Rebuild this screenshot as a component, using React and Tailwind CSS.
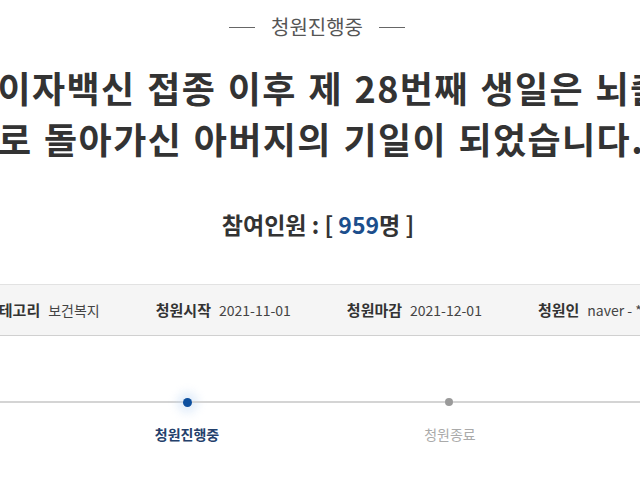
const Item = ({ label, value }) => (
  <div className="shrink-0 flex items-center gap-[8px] whitespace-nowrap">
    <span className="font-bold text-[#333] text-[15px]">{label}</span>
    <span className="text-[#444] text-[14px]">{value}</span>
  </div>
);

export default function App() {
  return (
    <div className="w-[640px] h-[480px] bg-white overflow-hidden font-['Noto_Sans_CJK_KR',sans-serif]">
      {/* status label */}
      <div className="pt-[16px] h-[38px] flex items-center justify-center gap-[16px] text-[#555] -ml-[6px]">
        <span className="w-[26px] h-px bg-[#666]" />
        <span className="text-[20px] leading-[22px]">청원진행중</span>
        <span className="w-[26px] h-px bg-[#666]" />
      </div>

      {/* title */}
      <div className="mt-[24px] text-[36px] leading-[51px] font-bold text-[#333] whitespace-nowrap tracking-[1.4px] [word-spacing:2px]">
        <div className="-ml-[37px]">화이자백신 접종 이후 제 28번째 생일은 뇌출혈</div>
        <div className="-ml-[2px]">로 돌아가신 아버지의 기일이 되었습니다.</div>
      </div>

      {/* participants */}
      <div className="mt-[44px] h-[32px] flex items-center justify-center text-[23px] font-bold text-[#333] whitespace-pre -ml-[4px]">
        참여인원 : [ <span className="text-[#1c4e8c]">959</span>명 ]
      </div>

      {/* info bar */}
      <div className="mt-[44px] h-[52px] bg-[#f5f5f5] border-t border-[#e2e2e2] border-b border-b-[#d0d0d0] flex items-center gap-[56px] -ml-[15px]">
        <Item label="카테고리" value="보건복지" />
        <Item label="청원시작" value="2021-11-01" />
        <Item label="청원마감" value="2021-12-01" />
        <Item label="청원인" value="naver - ***" />
      </div>

      {/* progress */}
      <div className="mt-[56px] h-[20px] flex items-center">
        <div className="w-[183px] h-[2px] bg-[#d4d4d4]" />
        <div className="w-[9px] h-[9px] rounded-full bg-[#0d4f9e] shrink-0 shadow-[0_0_10px_6px_rgba(190,215,245,0.45)]" />
        <div className="w-[253px] h-[2px] bg-[#d4d4d4]" />
        <div className="w-[8px] h-[8px] rounded-full bg-[#9a9a9a] shrink-0" />
        <div className="flex-1 h-[2px] bg-[#d4d4d4]" />
      </div>
      <div className="mt-[12px] h-[20px] flex items-center text-[14px] leading-[20px] whitespace-nowrap">
        <div className="ml-[137px] w-[100px] text-center font-bold text-[#24406b]">청원진행중</div>
        <div className="ml-[163px] w-[100px] text-center text-[#aaa]">청원종료</div>
      </div>
    </div>
  );
}
